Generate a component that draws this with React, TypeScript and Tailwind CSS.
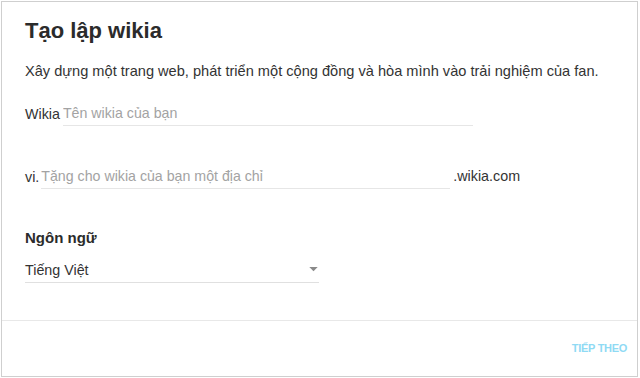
export default function App() {
  return (
    <div className="h-[378px] w-[640px] bg-white pl-px pt-px font-['Liberation_Sans',Arial,sans-serif] text-[#333]">
      <div className="flex h-[376px] w-[637px] flex-col border border-[#cfcfcf]">
        <div className="flex-1 pl-[23px] pt-[15px]">
          <h1 className="text-[22px] font-bold leading-[28px] text-[#2b2b2b]">Tạo lập wikia</h1>
          <p className="mt-[16px] text-[14.6px] leading-[20px]">
            Xây dựng một trang web, phát triển một cộng đồng và hòa mình vào trải nghiệm của fan.
          </p>

          <div className="mt-[20px] flex items-end">
            <span className="text-[14.3px] leading-[24px]">Wikia</span>
            <input
              className="ml-[3px] h-[25px] w-[410px] border-b border-[#e6e6e6] text-[14.2px] leading-[24px] outline-none placeholder:text-[#a3a3a3]"
              placeholder="Tên wikia của bạn"
            />
          </div>

          <div className="mt-[38px] flex items-end">
            <span className="text-[14.3px] leading-[24px]">vi.</span>
            <input
              className="ml-[2px] h-[25px] w-[409px] border-b border-[#e6e6e6] text-[14.2px] leading-[24px] outline-none placeholder:text-[#a3a3a3]"
              placeholder="Tặng cho wikia của bạn một địa chỉ"
            />
            <span className="ml-[3px] pb-px text-[14.3px] leading-[24px]">.wikia.com</span>
          </div>

          <h2 className="mt-[39px] text-[15px] font-bold leading-[20px] text-[#2b2b2b]">Ngôn ngữ</h2>

          <div className="mt-[11px] flex h-[24px] w-[294px] items-center justify-between border-b border-[#e0e0e0]">
            <span className="text-[14.3px] leading-[23px]">Tiếng Việt</span>
            <svg width="9" height="5" viewBox="0 0 10 6" className="mr-[1px] mb-[3px]">
              <path d="M0 0h10L5 5z" fill="#8a8a8a" />
            </svg>
          </div>
        </div>

        <div className="flex h-[56px] items-center justify-end border-t border-[#e8e8e8] pr-[10px]">
          <button className="text-[11px] font-bold tracking-[-0.3px] text-[#8fdaf4]">TIẾP THEO</button>
        </div>
      </div>
    </div>
  )
}
